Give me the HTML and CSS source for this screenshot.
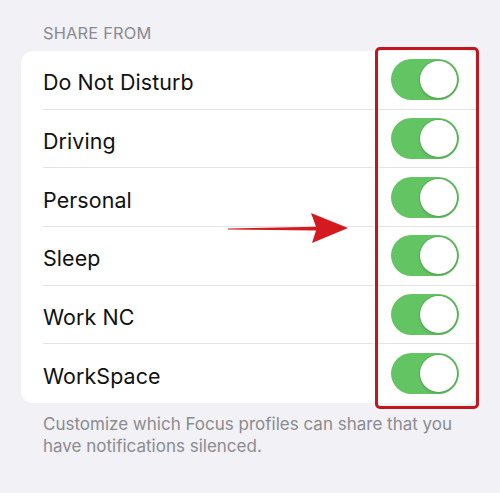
FILE: index.html
```html
<!DOCTYPE html>
<html>
<head>
<meta charset="utf-8">
<link rel="stylesheet" href="styles.css">
</head>
<body>
<div class="page">
  <div class="section-header">SHARE FROM</div>
  <div class="card">
    <div class="row"><div class="row-inner"><span class="label">Do Not Disturb</span><span class="toggle"><span class="knob"></span></span></div></div>
    <div class="row"><div class="row-inner"><span class="label">Driving</span><span class="toggle"><span class="knob"></span></span></div></div>
    <div class="row"><div class="row-inner"><span class="label">Personal</span><span class="toggle"><span class="knob"></span></span></div></div>
    <div class="row"><div class="row-inner"><span class="label">Sleep</span><span class="toggle"><span class="knob"></span></span></div></div>
    <div class="row"><div class="row-inner"><span class="label">Work NC</span><span class="toggle"><span class="knob"></span></span></div></div>
    <div class="row last"><div class="row-inner"><span class="label">WorkSpace</span><span class="toggle"><span class="knob"></span></span></div></div>
  </div>
  <div class="footer">Customize which Focus profiles can share that you have notifications silenced.</div>

  <div class="highlight"></div>
  <svg class="arrow" width="130" height="40" viewBox="0 0 130 40">
    <path d="M2 17.4 L90 15.8 L85 2 L122 17 L86 32 L90 19.5 L2 18.6 Z" fill="#d41a1f"/>
  </svg>
</div>
</body>
</html>
```
FILE: styles.css
```css
* { box-sizing: border-box; }
html, body { margin: 0; padding: 0; }
body {
  background: #f1f1f6;
  font-family: "Inter", "Liberation Sans", sans-serif;
  width: 500px;
  height: 493px;
  overflow: hidden;
}
.page {
  position: relative;
  width: 500px;
  height: 493px;
  padding-top: 23px;
}
.section-header {
  margin-left: 43px;
  font-size: 16.4px;
  line-height: 20px;
  color: #8a8a8f;
  letter-spacing: 0.2px;
}
.card {
  margin: 8px 0 0 21px;
  width: 458px;
  background: #ffffff;
  border-radius: 12px;
  overflow: hidden;
}
.row {
  height: 58.7px;
  padding-left: 22px;
}
.row-inner {
  height: 100%;
  display: flex;
  align-items: center;
  justify-content: space-between;
  padding-right: 20px;
  border-bottom: 1px solid #e4e4e8;
}
.row.last .row-inner { border-bottom: none; }
.label {
  font-size: 21.4px;
  color: #111111;
  letter-spacing: 0.1px;
  padding-top: 5px;
}
.toggle {
  width: 68px;
  height: 41px;
  border-radius: 21px;
  background: #63c463;
  position: relative;
  display: block;
}
.knob {
  position: absolute;
  right: 2px;
  top: 2px;
  width: 37px;
  height: 37px;
  border-radius: 50%;
  background: #fff;
  box-shadow: 0 0 0 1px rgba(90, 140, 90, 0.35), 0 2px 3px rgba(0,0,0,0.12);
}
.footer {
  margin: 10px 30px 0 43px;
  font-size: 17px;
  line-height: 22px;
  color: #8b8b90;
}
.highlight {
  position: absolute;
  left: 375px;
  top: 47px;
  width: 104px;
  height: 362px;
  border: 3px solid #c3161c;
  border-radius: 5px;
  box-shadow: 0 0 5px rgba(255,255,255,0.9);
}
.arrow {
  position: absolute;
  left: 226px;
  top: 211px;
}
```
